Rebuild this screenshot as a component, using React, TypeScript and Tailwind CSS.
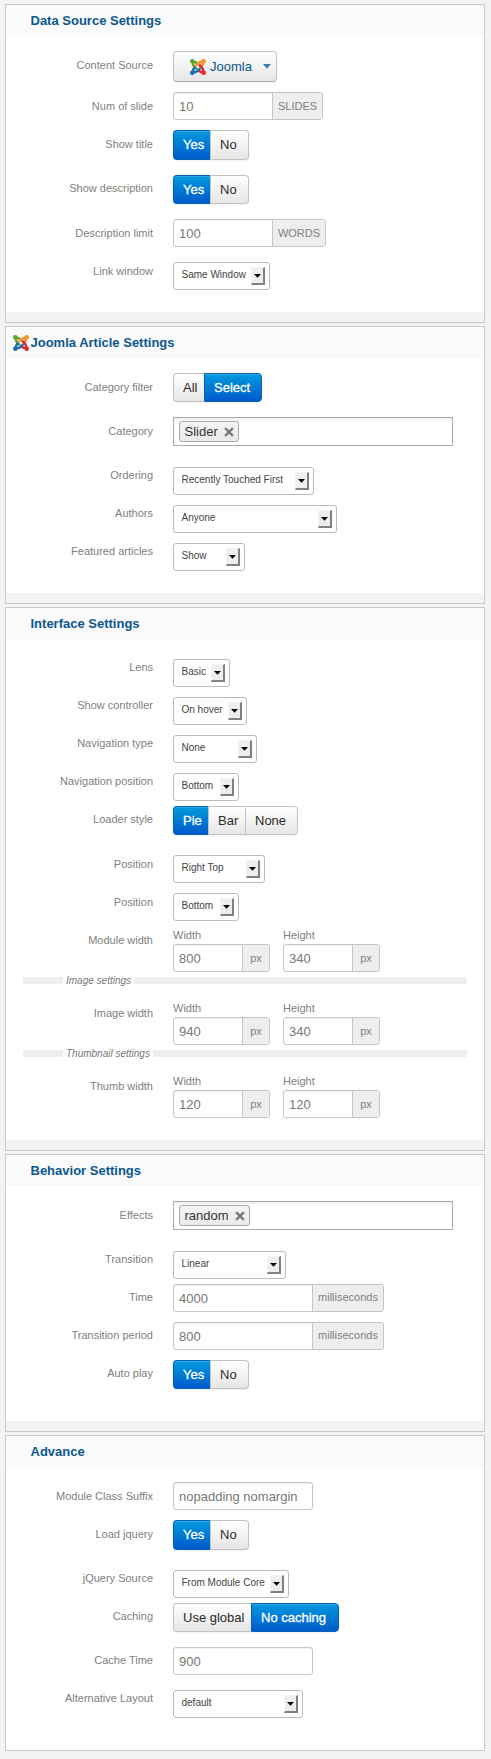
import type { ReactNode } from "react";

function JoomlaMark() {
  const arms = [
    { color: "#5ba52a", turn: 0 },
    { color: "#f9922a", turn: 90 },
    { color: "#e8252b", turn: 180 },
    { color: "#1b6cb5", turn: 270 },
  ];
  return (
    <svg viewBox="0 0 16 16" className="size-4 shrink-0">
      {arms.map((a) => (
        <g key={a.color} transform={`rotate(${a.turn} 8 8)`}>
          <circle cx="2.3" cy="2.3" r="2.3" fill={a.color} />
          <path d="M8 5.4 C6.4 3.2 4.6 2.7 2.9 2.8 C2.5 5 3 6.4 4.2 7.6 L7 10.4" fill="none" stroke={a.color} strokeWidth="2.4" />
        </g>
      ))}
    </svg>
  );
}

function Panel({ title, height, icon, footer = true, children }: { title: string; height: string; icon?: boolean; footer?: boolean; children: ReactNode }) {
  return (
    <section className={`flex w-[480px] flex-col border border-[#c8c8c8] bg-white ${height}`}>
      <h2 className="flex h-[31px] shrink-0 items-center bg-[#fafafa] text-[13px] leading-4 font-bold text-[#0b5790]">
        <span className="flex w-[24.5px] shrink-0 justify-end pr-[2px]">{icon && <JoomlaMark />}</span>
        <span>{title}</span>
      </h2>
      <div className="flex flex-col pt-[9px]">{children}</div>
      {footer && <div className="mt-auto h-[10px] bg-[#f3f3f3]" />}
    </section>
  );
}

function Row({ label, h, c = "pt-[6px]", children }: { label: string; h: string; c?: string; children: ReactNode }) {
  return (
    <div className={`flex shrink-0 items-start ${h}`}>
      <div className="w-[147px] shrink-0 pt-3 text-right text-[11px] leading-4 whitespace-nowrap text-[#808080]">{label}</div>
      <div className={`ml-5 flex ${c}`}>{children}</div>
    </div>
  );
}

function Field({ value, w, unit, unitClass = "" }: { value: string; w: string; unit?: string; unitClass?: string }) {
  return (
    <div className="flex h-7 overflow-hidden rounded-[3px] border border-[#c6c6c6] bg-white shadow-[inset_0_1px_1px_rgba(0,0,0,0.06)]">
      <span className={`flex items-center pt-px pl-[5px] text-[13px] leading-4 whitespace-nowrap text-[#777] ${w}`}>{value}</span>
      {unit && (
        <span className={`flex items-center justify-center border-l border-[#c6c6c6] bg-[#eee] text-[11px] leading-4 text-[#808080] ${unitClass}`}>{unit}</span>
      )}
    </div>
  );
}

type Option = { text: string; w: string; on?: boolean };

function Toggle({ options, h = "h-[29px]" }: { options: Option[]; h?: string }) {
  return (
    <div className={`flex rounded-[4px] shadow-[0_1px_2px_rgba(0,0,0,0.06)] ${h}`}>
      {options.map((o, i) => {
        const first = i === 0;
        const last = i === options.length - 1;
        const afterOn = i > 0 && options[i - 1].on;
        return (
          <button
            key={o.text}
            className={`flex items-center border-y pl-[9px] text-[13px] leading-4 whitespace-nowrap ${o.w} ${first ? "rounded-l-[4px]" : ""} ${last ? "rounded-r-[4px] border-r" : ""} ${
              o.on
                ? "border-l border-[#0263b8] bg-linear-to-b from-[#0a9ade] to-[#0159cc] text-white [-webkit-text-stroke:0.3px_white] shadow-[inset_0_1px_0_rgba(255,255,255,0.15)]"
                : "border-l border-[#c2c2c2] bg-linear-to-b from-white to-[#e6e6e6] text-[#2b2b2b]"
            } ${afterOn ? "border-l-[#b8c4d0]" : ""}`}
          >
            {o.text}
          </button>
        );
      })}
    </div>
  );
}

function YesNo({ h }: { h?: string }) {
  return <Toggle h={h} options={[{ text: "Yes", w: "w-[37px]", on: true }, { text: "No", w: "w-[39px]" }]} />;
}

function Select({ value, w }: { value: string; w: string }) {
  return (
    <div className={`flex h-7 items-start justify-between rounded-[3px] border border-[#bbb] bg-white pt-1 pr-1 pl-[7.5px] ${w}`}>
      <span className="pt-px text-[10px] leading-[14px] whitespace-nowrap text-[#444]">{value}</span>
      <span className="flex h-[18px] w-[14px] shrink-0 items-center justify-center border-t border-r-2 border-b-2 border-l border-[#808080] border-t-[#f4f4f4] border-l-[#f4f4f4] bg-[#eee]">
        <svg viewBox="0 0 7 4" className="h-1 w-[7px]"><path d="M0 0h7L3.5 3.8z" fill="#000" /></svg>
      </span>
    </div>
  );
}

function TagBox({ tag, w }: { tag: string; w: string }) {
  return (
    <div className="flex h-[29px] w-[280px] border border-[#aaa] bg-linear-to-b from-[#eee] to-white to-[15%] pt-[3px] pl-[5px]">
      <span className={`flex h-[21px] items-center justify-between rounded-[3px] border border-[#aaa] bg-linear-to-b from-[#f4f4f4] to-[#eaeaea] pr-[4px] pl-[4.5px] text-[13px] leading-4 text-[#333] ${w}`}>
        {tag}
        <svg viewBox="0 0 9 9" className="mt-px size-[10px]"><path d="M1 1l7 7M8 1L1 8" stroke="#777" strokeWidth="2.1" /></svg>
      </span>
    </div>
  );
}

function Size({ label, width, height, h }: { label: string; width: string; height: string; h: string }) {
  return (
    <Row label={label} h={h} c="gap-[13px] pt-[7px]">
      {[["Width", width], ["Height", height]].map(([name, value]) => (
        <div key={name} className="flex flex-col text-[11px] leading-4 text-[#808080]">
          <span className="mb-px">{name}</span>
          <Field value={value} w="w-[68px]" unit="px" unitClass="w-[27px]" />
        </div>
      ))}
    </Row>
  );
}

function Divider({ text }: { text: string }) {
  return (
    <div className="mr-[17px] ml-[17px] flex h-[7px] items-center">
      <span className="h-full w-10 bg-[#eee]" />
      <span className="px-[3px] text-[10px] leading-[7px] whitespace-nowrap text-[#777] italic">{text}</span>
      <span className="h-full grow bg-[#eee]" />
    </div>
  );
}

export default function App() {
  return (
    <main className="flex h-[1759px] w-[491px] flex-col gap-[3px] bg-[#f3f3f3] pt-1 pl-[5px] font-['Liberation_Sans',Arial,sans-serif]">
      <Panel title="Data Source Settings" height="h-[319px]">
        <Row label="Content Source" h="h-[41px]">
          <button className="flex h-[31px] w-[104px] items-center rounded-[4px] border border-[#c2c2c2] border-b-[#b0b0b0] bg-linear-to-b from-white to-[#e6e6e6] pl-[16px] text-[13px] leading-4 text-[#0b5790] shadow-[0_1px_2px_rgba(0,0,0,0.06)]">
            <JoomlaMark />
            <span className="ml-[4px] w-[53px] text-left">Joomla</span>
            <svg viewBox="0 0 8 5" className="h-[5px] w-2 shrink-0"><path d="M0 0h8L4 4.8z" fill="#3a7fae" /></svg>
          </button>
        </Row>
        <Row label="Num of slide" h="h-[38px]">
          <Field value="10" w="w-[98px]" unit="SLIDES" unitClass="w-[50px]" />
        </Row>
        <Row label="Show title" h="h-[44px]">
          <YesNo h="h-[30px]" />
        </Row>
        <Row label="Show description" h="h-[45px]" c="pt-[7px]">
          <YesNo />
        </Row>
        <Row label="Description limit" h="h-[38px]">
          <Field value="100" w="w-[98px]" unit="WORDS" unitClass="w-[53px]" />
        </Row>
        <Row label="Link window" h="h-[40px]" c="pt-[11px]">
          <Select value="Same Window" w="w-[97px]" />
        </Row>
      </Panel>

      <Panel title="Joomla Article Settings" height="h-[278px]" icon>
        <Row label="Category filter" h="h-[44px]">
          <Toggle options={[{ text: "All", w: "w-[31px]" }, { text: "Select", w: "w-[58px]", on: true }]} />
        </Row>
        <Row label="Category" h="h-[44px]">
          <TagBox tag="Slider" w="w-[60px]" />
        </Row>
        <Row label="Ordering" h="h-[38px]" c="pt-[12px]">
          <Select value="Recently Touched First" w="w-[141px]" />
        </Row>
        <Row label="Authors" h="h-[38px]" c="pt-[12px]">
          <Select value="Anyone" w="w-[164px]" />
        </Row>
        <Row label="Featured articles" h="h-[40px]" c="pt-[12px]">
          <Select value="Show" w="w-[72px]" />
        </Row>
      </Panel>

      <Panel title="Interface Settings" height="h-[544px]">
        <Row label="Lens" h="-mt-px h-[38px]" c="pt-[12px]">
          <Select value="Basic" w="w-[57px]" />
        </Row>
        <Row label="Show controller" h="h-[38px]" c="pt-[12px]">
          <Select value="On hover" w="w-[74px]" />
        </Row>
        <Row label="Navigation type" h="h-[38px]" c="pt-[12px]">
          <Select value="None" w="w-[84px]" />
        </Row>
        <Row label="Navigation position" h="h-[38px]" c="pt-[12px]">
          <Select value="Bottom" w="w-[66px]" />
        </Row>
        <Row label="Loader style" h="h-[45px]" c="pt-[7px]">
          <Toggle options={[{ text: "Pie", w: "w-[35px]", on: true }, { text: "Bar", w: "w-[37px]" }, { text: "None", w: "w-[53px]" }]} />
        </Row>
        <Row label="Position" h="h-[38px]" c="pt-[11px]">
          <Select value="Right Top" w="w-[92px]" />
        </Row>
        <Row label="Position" h="h-[38px]" c="pt-[11px]">
          <Select value="Bottom" w="w-[66px]" />
        </Row>
        <Size label="Module width" width="800" height="340" h="h-[57px]" />
        <Divider text="Image settings" />
        <Size label="Image width" width="940" height="340" h="mt-[9px] h-[57px]" />
        <Divider text="Thumbnail settings" />
        <Size label="Thumb width" width="120" height="120" h="mt-[9px] h-[57px]" />
      </Panel>

      <Panel title="Behavior Settings" height="h-[278px]">
        <Row label="Effects" h="h-[44px]">
          <TagBox tag="random" w="w-[71px]" />
        </Row>
        <Row label="Transition" h="h-[38px]" c="pt-[12px]">
          <Select value="Linear" w="w-[113px]" />
        </Row>
        <Row label="Time" h="h-[38px]" c="pt-[7px]">
          <Field value="4000" w="w-[138px]" unit="milliseconds" unitClass="w-[71px] pb-[2px]" />
        </Row>
        <Row label="Transition period" h="h-[38px]" c="pt-[7px]">
          <Field value="800" w="w-[138px]" unit="milliseconds" unitClass="w-[71px] pb-[2px]" />
        </Row>
        <Row label="Auto play" h="h-[40px]" c="pt-[7px]">
          <YesNo />
        </Row>
      </Panel>

      <Panel title="Advance" height="h-[316px]" footer={false}>
        <Row label="Module Class Suffix" h="h-[38px]">
          <Field value="nopadding nomargin" w="w-[138px]" />
        </Row>
        <Row label="Load jquery" h="h-[44px]">
          <YesNo h="h-[30px]" />
        </Row>
        <Row label="jQuery Source" h="h-[38px]" c="pt-[12px]">
          <Select value="From Module Core" w="w-[116px]" />
        </Row>
        <Row label="Caching" h="h-[44px]" c="pt-[7px]">
          <Toggle options={[{ text: "Use global", w: "w-[78px]" }, { text: "No caching", w: "w-[88px]", on: true }]} />
        </Row>
        <Row label="Cache Time" h="h-[38px]" c="pt-[7px]">
          <Field value="900" w="w-[138px]" />
        </Row>
        <Row label="Alternative Layout" h="h-[40px]" c="pt-[12px]">
          <Select value="default" w="w-[130px]" />
        </Row>
      </Panel>
    </main>
  );
}
